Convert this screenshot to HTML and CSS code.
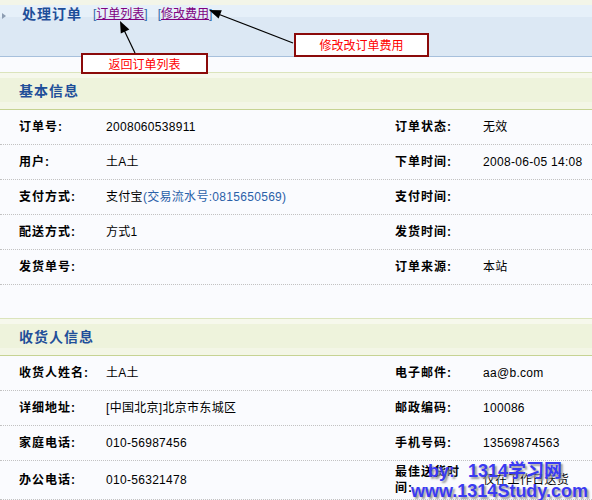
FILE: index.html
```html
<!DOCTYPE html>
<html lang="zh-CN">
<head>
<meta charset="utf-8">
<title>处理订单</title>
<link rel="stylesheet" href="styles.css">
</head>
<body>
<div class="page">
  <div class="topbar">
    <span class="tri"></span>
    <h1 class="title">处理订单</h1>
    <span class="links"><span class="br">[</span><a href="#">订单列表</a><span class="br">]</span><span class="gap"></span><span class="br">[</span><a href="#">修改费用</a><span class="br">]</span></span>
  </div>

  <div class="content">
    <section class="group group-first">
      <h2 class="group-head">基本信息</h2>
      <div class="row">
        <div class="label">订单号:</div><div class="value">2008060538911</div>
        <div class="rlabel">订单状态:</div><div class="value">无效</div>
      </div>
      <div class="row">
        <div class="label">用户:</div><div class="value">土A土</div>
        <div class="rlabel">下单时间:</div><div class="value">2008-06-05 14:08</div>
      </div>
      <div class="row">
        <div class="label">支付方式:</div><div class="value">支付宝<span class="blue">(交易流水号:0815650569)</span></div>
        <div class="rlabel">支付时间:</div><div class="value"></div>
      </div>
      <div class="row">
        <div class="label">配送方式:</div><div class="value">方式1</div>
        <div class="rlabel">发货时间:</div><div class="value"></div>
      </div>
      <div class="row">
        <div class="label">发货单号:</div><div class="value"></div>
        <div class="rlabel">订单来源:</div><div class="value">本站</div>
      </div>
    </section>

    <section class="group">
      <h2 class="group-head">收货人信息</h2>
      <div class="row">
        <div class="label">收货人姓名:</div><div class="value">土A土</div>
        <div class="rlabel">电子邮件:</div><div class="value">aa@b.com</div>
      </div>
      <div class="row">
        <div class="label">详细地址:</div><div class="value">[中国北京]北京市东城区</div>
        <div class="rlabel">邮政编码:</div><div class="value">100086</div>
      </div>
      <div class="row">
        <div class="label">家庭电话:</div><div class="value">010-56987456</div>
        <div class="rlabel">手机号码:</div><div class="value">13569874563</div>
      </div>
      <div class="row">
        <div class="label">办公电话:</div><div class="value">010-56321478</div>
        <div class="rlabel">最佳送货时间:</div><div class="value">仅在工作日送货</div>
      </div>
    </section>
  </div>

  <div class="note note-back">返回订单列表</div>
  <div class="note note-fee">修改改订单费用</div>

  <svg class="arrows" width="592" height="500" viewBox="0 0 592 500">
    <line x1="135" y1="53" x2="124" y2="30" stroke="#000" stroke-width="1.2"/>
    <polygon points="120,21 129.4,29.6 120.8,33.6" fill="#000"/>
    <line x1="293" y1="43" x2="218" y2="14" stroke="#000" stroke-width="1.2"/>
    <polygon points="209,10 221.8,10.2 218.6,18.6" fill="#000"/>
  </svg>

  <div class="wm">
    <div class="wm-line wm-1">by:<span class="wm-gap">1314学习网</span></div>
    <div class="wm-line">www.1314Study.com</div>
  </div>
</div>
</body>
</html>
```

FILE: styles.css
```css
html, body {
  margin: 0;
  padding: 0;
}

body {
  background: #f3f5e8;
  font-family: "Liberation Sans", "Noto Sans CJK SC", sans-serif;
  font-size: 12px;
  color: #000;
}

.page {
  position: relative;
  width: 592px;
  height: 500px;
  overflow: hidden;
  padding-top: 5px;
  box-sizing: border-box;
}

/* ---------- top bar ---------- */
.topbar {
  height: 51px;
  border-bottom: 1px solid #a7c0dc;
  background: linear-gradient(#e6f0f9 0, #e6f0f9 12px, #dce8f4 12px, #dce8f4 100%);
  display: flex;
  align-items: flex-start;
  padding-left: 2px;
}

.tri {
  width: 0;
  height: 0;
  border-left: 4px solid #8d9db2;
  border-top: 3px solid transparent;
  border-bottom: 3px solid transparent;
  margin-top: 8px;
}

.title {
  margin: 0 0 0 16px;
  font-family: "Noto Sans CJK SC", sans-serif;
  font-size: 14px;
  font-weight: bold;
  letter-spacing: 1px;
  line-height: 17px;
  color: #1f4f99;
}

.links {
  margin-left: 11px;
  padding-top: 1px;
  line-height: 17px;
  font-size: 12px;
}

.links .br {
  color: #2f68a8;
}

.links a {
  color: #800080;
  text-decoration: underline;
}

.links .gap {
  display: inline-block;
  width: 10px;
}

/* ---------- content ---------- */
.content {
  background: #fafbfe;
  padding-top: 15px;
  height: 500px;
}

.group-first {
  margin-bottom: 33px;
}

.group-head {
  margin: 0;
  height: 36px;
  line-height: 34px;
  padding-left: 19px;
  border-top: 1px solid #dbe4bc;
  border-bottom: 1px solid #c6d393;
  background: linear-gradient(#f6f8ec 0, #f6f8ec 5px, #eef3dc 5px, #eef3dc 29px, #f3f6e6 29px, #f3f6e6 100%);
  font-family: "Noto Sans CJK SC", sans-serif;
  font-size: 14px;
  font-weight: bold;
  letter-spacing: 1px;
  color: #1f4f99;
}

.row {
  display: grid;
  grid-template-columns: 106px 289px 88px 1fr;
  align-items: center;
  min-height: 35px;
  padding: 3px 0;
  box-sizing: border-box;
  border-bottom: 1px dotted #c2c2c2;
}

.label,
.rlabel {
  font-weight: bold;
  letter-spacing: 1px;
  line-height: 16px;
}

.label {
  padding-left: 19px;
}

.rlabel {
  padding-right: 20px;
}

.value {
  letter-spacing: 0.3px;
  line-height: 16px;
}

.blue {
  color: #2a60a8;
}

/* ---------- annotations ---------- */
.note {
  position: absolute;
  box-sizing: border-box;
  background: #fff;
  border: 2px solid #8b0a0a;
  color: #ff0000;
  font-family: "Noto Sans CJK SC", sans-serif;
  font-size: 12px;
  text-align: center;
}

.note-back {
  left: 81px;
  top: 53px;
  width: 127px;
  height: 21px;
  line-height: 17px;
}

.note-fee {
  left: 294px;
  top: 33px;
  width: 135px;
  height: 24px;
  line-height: 20px;
}

.arrows {
  position: absolute;
  left: 0;
  top: 0;
  pointer-events: none;
}

/* ---------- watermark ---------- */
.wm {
  position: absolute;
  left: 411px;
  top: 461px;
  font-family: "Liberation Sans", "Noto Sans CJK SC", sans-serif;
  font-size: 18px;
  font-weight: bold;
  color: #3a3af2;
  text-shadow: 2px 2px 2px #9a9a9a;
  white-space: nowrap;
}

.wm-line {
  line-height: 20px;
}

.wm-1 {
  padding-left: 17px;
}

.wm-gap {
  margin-left: 13px;
}
```
